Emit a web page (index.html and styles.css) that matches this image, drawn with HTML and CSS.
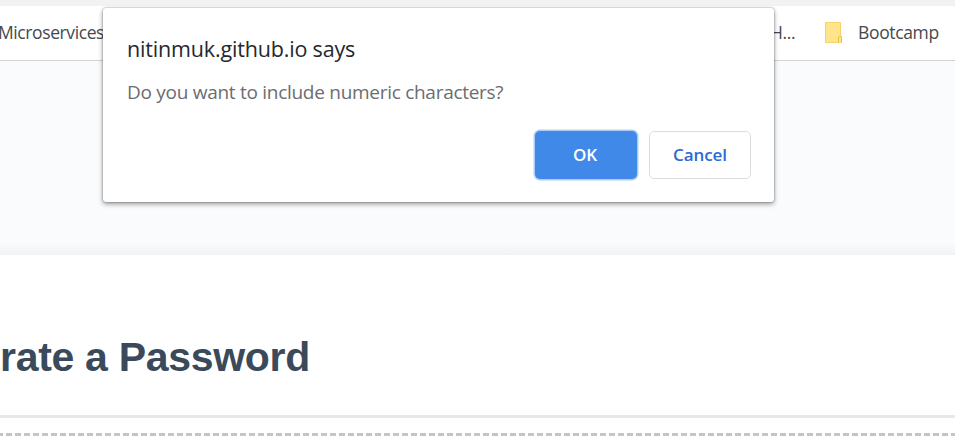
FILE: index.html
```html
<!DOCTYPE html>
<html lang="en">
<head>
<meta charset="utf-8">
<title>Password Generator</title>
<link rel="stylesheet" href="styles.css">
</head>
<body>
<nav class="bookmarks">
  <span class="bookmark first">Microservices</span>
  <span class="bookmark clipped">H...</span>
  <svg class="folder" width="20" height="24" viewBox="0 0 20 24"><path d="M2.5 1.5h15v14h1v6h-16z" fill="#ffe48c" stroke="#f5d469"/><path d="M15.5 21.5v-5q0-1 1-1h1q1 0 1 1v5" fill="#ffe48c" stroke="#e6bd3f"/></svg>
  <span class="bookmark bootcamp">Bootcamp</span>
</nav>
<div class="backdrop"></div>
<main class="card">
  <h2>rate a Password</h2>
  <div class="rule"></div>
  <svg class="dashes" width="955" height="3"><path d="M-3 1.5H955" stroke="#c0c6ca" stroke-width="3" stroke-dasharray="6 3"/></svg>
</main>
<section class="dialog" role="dialog">
  <h1>nitinmuk.github.io says</h1>
  <p>Do you want to include numeric characters?</p>
  <div class="actions">
    <button class="ok">OK</button>
    <button class="cancel">Cancel</button>
  </div>
</section>
</body>
</html>
```
FILE: styles.css
```css
* { box-sizing: border-box; }
body { margin: 0; width: 955px; height: 439px; overflow: hidden; background: #fff; font-family: "Open Sans", "Noto Sans", sans-serif; }
.bookmarks { height: 61px; display: flex; align-items: center; border-top: 6px solid #f2f2f2; border-bottom: 1px solid #d2d3d5; color: #46494d; font-size: 17.5px; line-height: 24px; white-space: nowrap; }
.bookmark { position: relative; top: -1px; }
.bookmark.first { width: 772px; margin-left: -2px; letter-spacing: -0.4px; }
.bookmark.clipped { width: 53px; letter-spacing: -0.4px; }
.folder { flex: none; margin-right: 15px; }
.bootcamp { letter-spacing: -0.35px; }
.backdrop { height: 194px; background: linear-gradient(#fafbfd 0, #fafbfd 182px, #f1f2f3 194px); }
.card { height: 184px; background: #fff; padding-top: 76px; }
h2 { margin: 0; height: 84px; font: bold 41px/52px "Liberation Sans", Arial, sans-serif; letter-spacing: -0.3px; color: #3b4a5a; }
.rule { height: 3px; background: #e8e8e8; margin-bottom: 15px; }
.dashes { display: block; }
.dialog { position: absolute; left: 103px; top: 8px; width: 671px; height: 194px; padding: 24px 23px 23px 24px; background: #fff; border-radius: 3px; box-shadow: 0 0 2px rgba(0,0,0,.4), 0 2px 5px rgba(0,0,0,.4); }
h1, p { margin: 0; font-weight: 400; white-space: nowrap; }
h1 { font-size: 21.5px; line-height: 34px; height: 42px; color: #25282c; letter-spacing: -0.17px; }
p { font-size: 19px; line-height: 36px; height: 57px; color: #6b6d70; letter-spacing: -0.28px; }
.actions { display: flex; justify-content: flex-end; gap: 12px; }
button { height: 48px; padding: 0; border-radius: 5px; font: 600 17px/24px "Open Sans", sans-serif; }
.ok { width: 102px; padding-right: 2px; border: 0; background: #4189e9; color: #fff; box-shadow: 0 0 0 1.5px #a9cff8; }
.cancel { width: 102px; border: 1px solid #dadce0; background: #fff; color: #2a6bd5; letter-spacing: -0.05px; }
```
